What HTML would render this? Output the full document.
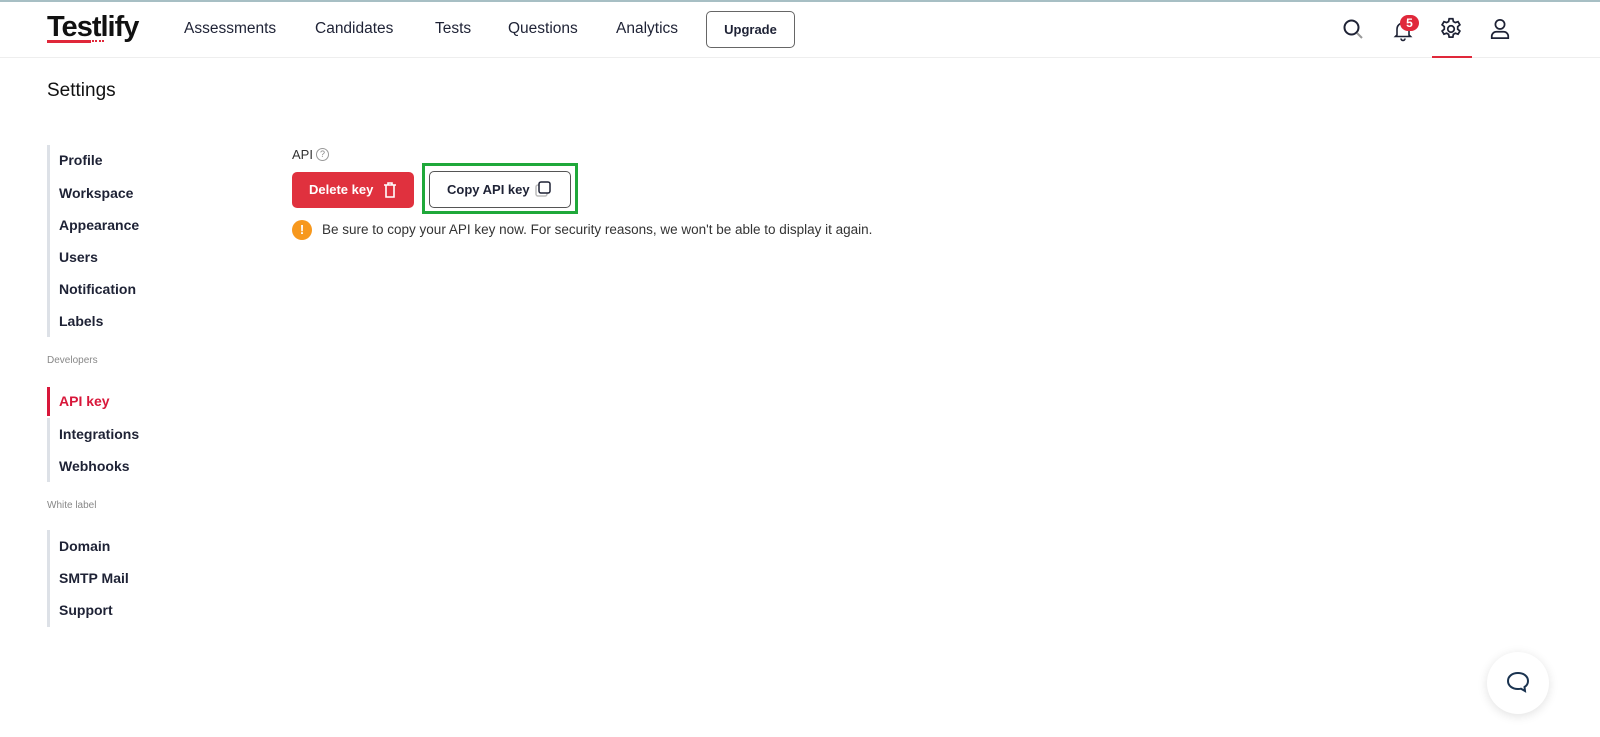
<!DOCTYPE html>
<html><head><style>
*{margin:0;padding:0;box-sizing:border-box}
body{width:1600px;height:737px;background:#fff;font-family:"Liberation Sans",sans-serif;color:#1e2235;position:relative;overflow:hidden}
.top{position:absolute;left:0;top:0;width:1600px;height:2px;background:#a7bfc4}
.hdr{position:absolute;left:0;top:2px;width:1600px;height:56px;border-bottom:1px solid #eee}
.a{position:absolute;white-space:nowrap}
.nav{font-size:15.5px;top:20px;color:#1e2235}
.sb{position:absolute;left:47px;width:3px;background:#dde1e7}
.it{position:absolute;left:59px;font-size:14px;font-weight:bold;color:#1e2235}
.sec{position:absolute;left:47px;font-size:10px;color:#888}
</style></head><body>
<div class="top"></div>
<div class="hdr"></div>
<div class="a" style="left:47px;top:11px;font-size:29px;font-weight:bold;letter-spacing:-1px;color:#111">Testlify</div>
<div class="a" style="left:47px;top:40px;width:44px;height:3px;background:#e0283a"></div>
<div class="a" style="left:92px;top:40px;width:12px;height:2px;border-top:2px dotted #e0283a"></div>
<div class="a nav" style="left:184px">Assessments</div>
<div class="a nav" style="left:315px">Candidates</div>
<div class="a nav" style="left:435px">Tests</div>
<div class="a nav" style="left:508px">Questions</div>
<div class="a nav" style="left:616px">Analytics</div>
<div class="a" style="left:706px;top:11px;width:89px;height:37px;border:1px solid #666;border-radius:5px;font-size:13px;font-weight:bold;text-align:center;line-height:35px">Upgrade</div>
<svg class="a" style="left:1341px;top:17px" width="24" height="24" viewBox="0 0 24 24" fill="none" stroke="#1e2235" stroke-width="2"><circle cx="10.5" cy="10.5" r="7"/><path d="M16 16l5 5" stroke="#999"/></svg>
<svg class="a" style="left:1391px;top:18px" width="24" height="24" viewBox="0 0 24 24" fill="none" stroke="#1e2235" stroke-width="1.6"><path d="M6 17V11a6 6 0 0112 0v6l1.5 1.5h-15z"/><path d="M10 20.5a2 2 0 004 0"/></svg>
<div class="a" style="left:1400px;top:15px;width:19px;height:16px;border-radius:8px;background:#e0283a;color:#fff;font-size:12px;font-weight:bold;text-align:center;line-height:16px">5</div>
<svg class="a" style="left:1438px;top:16px" width="26" height="26" viewBox="0 0 24 24" fill="none" stroke="#1e2235" stroke-width="1.6"><circle cx="12" cy="12" r="3"/><path d="M10.3 2.5h3.4l.5 2.6 1.8 1 2.5-.9 1.7 2.9-2 1.7v2.4l2 1.7-1.7 2.9-2.5-.9-1.8 1-.5 2.6h-3.4l-.5-2.6-1.8-1-2.5.9-1.7-2.9 2-1.7v-2.4l-2-1.7 1.7-2.9 2.5.9 1.8-1z"/></svg>
<div class="a" style="left:1432px;top:56px;width:40px;height:2px;background:#e0283a"></div>
<svg class="a" style="left:1489px;top:17px" width="22" height="24" viewBox="0 0 24 26" fill="none" stroke="#1e2235" stroke-width="1.9"><circle cx="12" cy="8" r="5"/><path d="M3 23v-2a5 5 0 015-5h8a5 5 0 015 5v2z"/></svg>

<div class="a" style="left:47px;top:80px;font-size:19px;color:#111">Settings</div>

<div class="sb" style="top:145px;height:192px"></div>
<div class="it" style="top:152px">Profile</div>
<div class="it" style="top:185px">Workspace</div>
<div class="it" style="top:217px">Appearance</div>
<div class="it" style="top:249px">Users</div>
<div class="it" style="top:281px">Notification</div>
<div class="it" style="top:313px">Labels</div>
<div class="sec" style="top:355px">Developers</div>
<div class="sb" style="top:387px;height:29px;background:#d8173a"></div>
<div class="it" style="top:393px;color:#d8173a">API key</div>
<div class="sb" style="top:418px;height:64px"></div>
<div class="it" style="top:426px">Integrations</div>
<div class="it" style="top:458px">Webhooks</div>
<div class="sec" style="top:500px">White label</div>
<div class="sb" style="top:530px;height:97px"></div>
<div class="it" style="top:538px">Domain</div>
<div class="it" style="top:570px">SMTP Mail</div>
<div class="it" style="top:602px">Support</div>

<div class="a" style="left:292px;top:147px;font-size:13px;color:#333">API</div>
<div class="a" style="left:316px;top:148px;width:13px;height:13px;border:1px solid #999;border-radius:50%;font-size:9px;color:#888;text-align:center;line-height:11px">?</div>
<div class="a" style="left:292px;top:172px;width:122px;height:36px;background:#e0313e;border-radius:5px;color:#fff;font-size:13px;font-weight:bold;line-height:36px;padding-left:17px">Delete key</div>
<svg class="a" style="left:383px;top:182px" width="14" height="16" viewBox="0 0 14 16" fill="none" stroke="#fff" stroke-width="1.6"><path d="M1 3h12M5 3V1h4v2M3 3v12h8V3"/></svg>
<div class="a" style="left:422px;top:163px;width:156px;height:51px;border:3px solid #1fa83a"></div>
<div class="a" style="left:429px;top:171px;width:142px;height:37px;border:1px solid #555;border-radius:5px;font-size:13px;font-weight:bold;line-height:35px;padding-left:17px;color:#1e2235">Copy API key</div>
<svg class="a" style="left:535px;top:181px" width="17" height="17" viewBox="0 0 17 17" fill="none" stroke-width="1.5"><rect x="1" y="4" width="11" height="11" rx="2" stroke="#bbb"/><rect x="4" y="1" width="11" height="11" rx="2" stroke="#1e2235" fill="#fff"/></svg>
<div class="a" style="left:292px;top:220px;width:20px;height:20px;border-radius:50%;background:#f7981d;color:#fff;font-size:13px;font-weight:bold;text-align:center;line-height:20px">!</div>
<div class="a" style="left:322px;top:222px;font-size:13.5px;color:#333">Be sure to copy your API key now. For security reasons, we won't be able to display it again.</div>

<div class="a" style="left:1487px;top:652px;width:62px;height:62px;border-radius:50%;background:#fff;box-shadow:0 2px 10px rgba(0,0,0,.12)"></div>
<svg class="a" style="left:1505px;top:670px" width="26" height="26" viewBox="0 0 26 26" fill="none" stroke="#1a3350" stroke-width="2"><path d="M13 3C7 3 3 6.5 3 11s4 8 10 8c1 0 2 0 3-.3l4 2.3-.5-4C22 15.5 23 13.5 23 11c0-4.5-4-8-10-8z"/></svg>
</body></html>
